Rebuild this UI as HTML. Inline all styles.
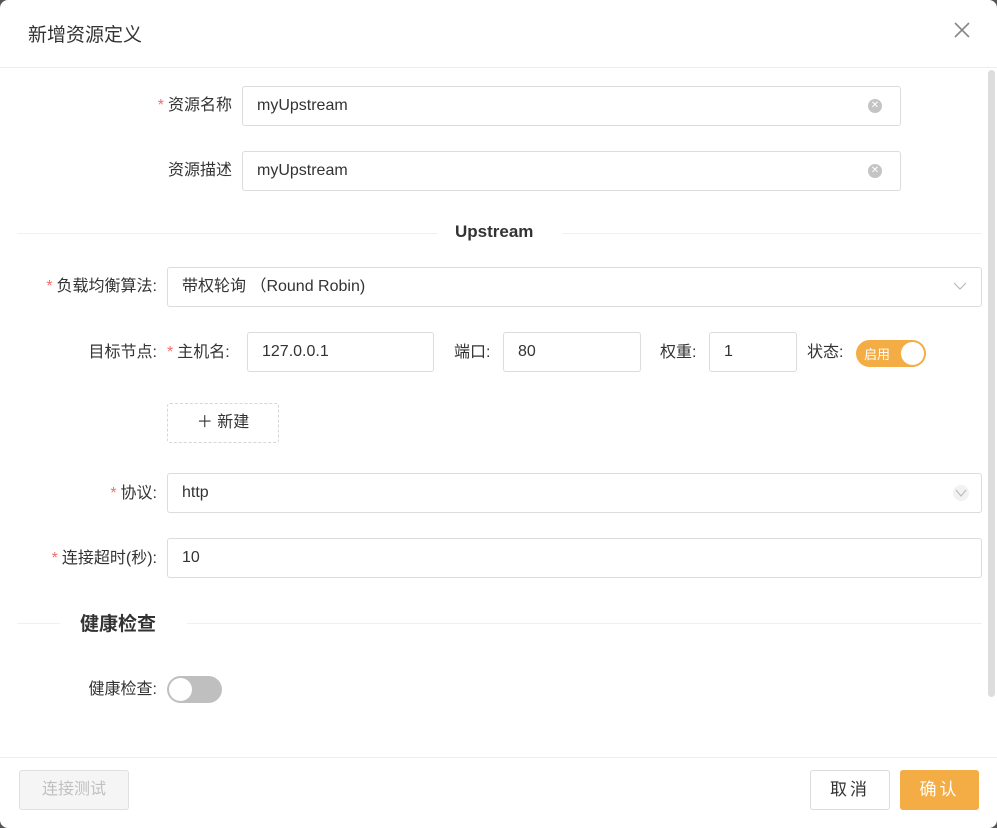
<!DOCTYPE html>
<html><head><meta charset="utf-8"><style>
*{box-sizing:border-box;margin:0;padding:0}
html,body{width:997px;height:828px;overflow:hidden;background:#555}
body{font-family:"Liberation Sans","Noto Sans CJK SC",sans-serif;color:#333;font-size:16px}
.dlg{position:absolute;left:0;top:0;width:997px;height:828px;background:#fff;border-radius:8px;overflow:hidden}
.abs{position:absolute}
.title{left:28px;top:20px;font-size:19px;color:#333}
.close{left:952px;top:20px;width:20px;height:20px}
.hr{height:1px;background:#eee;left:0;width:997px}
.lbl{position:absolute;font-size:16px;color:#333;white-space:nowrap;line-height:20px}
.req{color:#f56c6c;margin-right:4px}
.inp{position:absolute;border:1px solid #dcdcdc;border-radius:3px;height:40px;padding-left:14px;line-height:38px;font-size:16px;color:#333;background:#fff}
.clr{position:absolute;right:18px;top:12px;width:14px;height:14px;border-radius:50%;background:#c4c4c4;color:#fff;font-size:10px;line-height:14px;text-align:center}
.sec{position:absolute;height:1px;background:#f0f0f0}
.scroll{left:988px;top:70px;width:7px;height:627px;background:#ddd;border-radius:4px}
</style></head><body><div class="dlg">
<div class="abs title">新增资源定义</div>
<svg class="abs close" viewBox="0 0 20 20"><path d="M3 3L17 17M17 3L3 17" stroke="#888" stroke-width="1.6"/></svg>
<div class="abs hr" style="top:67px"></div>
<div class="abs scroll"></div>

<div class="lbl" style="right:765px;top:96px"><span class="req">*</span>资源名称</div>
<div class="inp" style="left:242px;top:86px;width:659px">myUpstream<span class="clr">✕</span></div>
<div class="lbl" style="right:765px;top:161px">资源描述</div>
<div class="inp" style="left:242px;top:151px;width:659px">myUpstream<span class="clr">✕</span></div>

<div class="sec" style="left:17px;top:233px;width:420px"></div>
<div class="lbl" style="left:455px;top:222px;font-weight:bold;font-size:17px">Upstream</div>
<div class="sec" style="left:562px;top:233px;width:420px"></div>

<div class="lbl" style="right:840px;top:277px"><span class="req">*</span>负载均衡算法:</div>
<div class="inp" style="left:167px;top:267px;width:815px">带权轮询 （Round Robin)
<svg class="abs" style="right:14px;top:13px" width="14" height="10" viewBox="0 0 14 10"><path d="M1 2L7 8L13 2" fill="none" stroke="#bbb" stroke-width="1.2"/></svg></div>

<div class="lbl" style="right:840px;top:343px">目标节点:</div>
<div class="lbl" style="left:167px;top:343px"><span class="req">*</span>主机名:</div>
<div class="inp" style="left:247px;top:332px;width:187px">127.0.0.1</div>
<div class="lbl" style="left:454px;top:343px">端口:</div>
<div class="inp" style="left:503px;top:332px;width:138px">80</div>
<div class="lbl" style="left:660px;top:343px">权重:</div>
<div class="inp" style="left:709px;top:332px;width:88px">1</div>
<div class="lbl" style="left:807px;top:343px">状态:</div>
<div class="abs" style="left:856px;top:340px;width:70px;height:27px;border-radius:14px;background:#f4ac45">
<span class="abs" style="left:8px;top:4px;color:#fff;font-size:13px">启用</span>
<span class="abs" style="left:45px;top:2px;width:23px;height:23px;border-radius:50%;background:#fff"></span></div>

<div class="abs" style="left:167px;top:403px;width:112px;height:40px;border:1px dashed #d6d6d6;border-radius:3px;text-align:center;line-height:38px;font-size:16px">＋ 新建</div>

<div class="lbl" style="right:840px;top:484px"><span class="req">*</span>协议:</div>
<div class="inp" style="left:167px;top:473px;width:815px">http
<span class="abs" style="right:12px;top:11px;width:16px;height:16px;border-radius:50%;background:#f2f2f2"></span>
<svg class="abs" style="right:14px;top:15px" width="12" height="9" viewBox="0 0 12 9"><path d="M1 1L6 7L11 1" fill="none" stroke="#bbb" stroke-width="1.2"/></svg></div>

<div class="lbl" style="right:840px;top:549px"><span class="req">*</span>连接超时(秒):</div>
<div class="inp" style="left:167px;top:538px;width:815px">10</div>

<div class="sec" style="left:17px;top:623px;width:43px"></div>
<div class="lbl" style="left:80px;top:613px;font-weight:bold;font-size:19px;line-height:24px">健康检查</div>
<div class="sec" style="left:187px;top:623px;width:795px"></div>

<div class="lbl" style="right:840px;top:680px">健康检查:</div>
<div class="abs" style="left:167px;top:676px;width:55px;height:27px;border-radius:14px;background:#bfbfbf">
<span class="abs" style="left:2px;top:2px;width:23px;height:23px;border-radius:50%;background:#fff"></span></div>

<div class="abs hr" style="top:757px"></div>
<div class="abs" style="left:19px;top:770px;width:110px;height:40px;border:1px solid #e0e0e0;border-radius:3px;background:#f5f5f5;color:#c0c0c0;text-align:center;line-height:38px">连接测试</div>
<div class="abs" style="left:810px;top:770px;width:80px;height:40px;border:1px solid #dcdcdc;border-radius:3px;text-align:center;line-height:38px;font-size:17px;letter-spacing:3px">取消</div>
<div class="abs" style="left:900px;top:770px;width:79px;height:40px;border-radius:3px;background:#f4ac45;color:#fff;text-align:center;line-height:40px;font-size:17px;letter-spacing:3px">确认</div>
</div></body></html>
